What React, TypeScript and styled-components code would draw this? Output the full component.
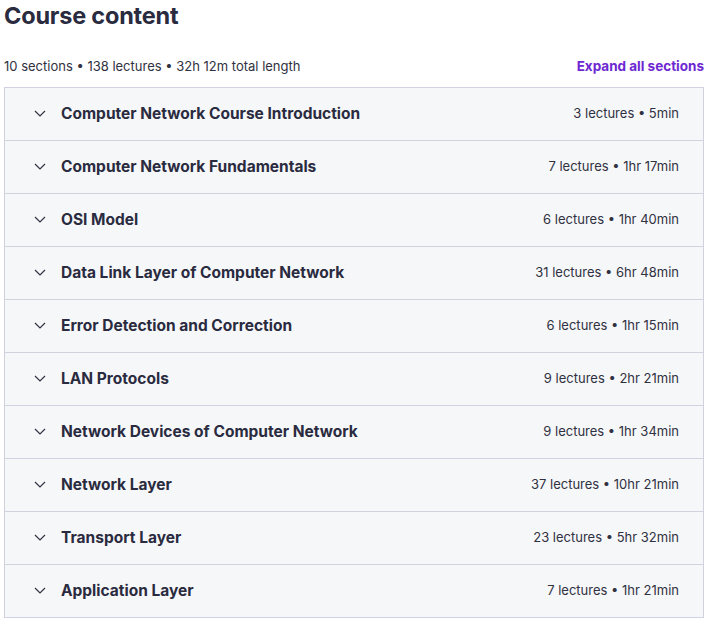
import React from 'react';
import styled, { createGlobalStyle } from 'styled-components';

const GlobalStyle = createGlobalStyle`
	html, body {
		margin: 0;
		padding: 0;
		background: #ffffff;
	}
	body {
		font-family: Inter, 'Noto Sans', sans-serif;
		color: #303141;
	}
`;

const Page = styled.div`
	width: 700px;
	padding: 0 6px 0 4px;
`;

const Heading = styled.h2`
	margin: 0;
	font-size: 23.5px;
	line-height: 32px;
	font-weight: 700;
	color: #2a2b3f;
	letter-spacing: -0.2px;
`;

const Summary = styled.div`
	display: flex;
	justify-content: space-between;
	align-items: center;
	margin-top: 24px;
	height: 20px;
	margin-bottom: 11px;
`;

const Stats = styled.span`
	font-size: 13px;
	color: #303141;
`;

const ExpandAll = styled.button`
	border: none;
	background: none;
	padding: 0;
	font-family: inherit;
	font-size: 13.5px;
	font-weight: 700;
	color: #6d28d2;
	cursor: pointer;
`;

const List = styled.div`
	border: 1px solid #d1d2e0;
	border-bottom: none;
`;

const Row = styled.div`
	box-sizing: border-box;
	display: flex;
	align-items: center;
	height: 53px;
	padding: 0 24px 2px 27px;
	background: #f6f7f9;
	border-bottom: 1px solid #d1d2e0;
`;

const Chevron = styled.svg`
	width: 16px;
	height: 16px;
	flex: none;
	margin-right: 13px;
`;

const Title = styled.span`
	flex: 1;
	font-size: 15.5px;
	font-weight: 700;
	color: #2a2b3f;
`;

const Meta = styled.span`
	font-size: 13px;
	color: #303141;
`;

const sections = [
	['Computer Network Course Introduction', '3 lectures • 5min'],
	['Computer Network Fundamentals', '7 lectures • 1hr 17min'],
	['OSI Model', '6 lectures • 1hr 40min'],
	['Data Link Layer of Computer Network', '31 lectures • 6hr 48min'],
	['Error Detection and Correction', '6 lectures • 1hr 15min'],
	['LAN Protocols', '9 lectures • 2hr 21min'],
	['Network Devices of Computer Network', '9 lectures • 1hr 34min'],
	['Network Layer', '37 lectures • 10hr 21min'],
	['Transport Layer', '23 lectures • 5hr 32min'],
	['Application Layer', '7 lectures • 1hr 21min'],
];

const App = () => (
	<>
		<GlobalStyle />
		<Page>
			<Heading>Course content</Heading>
			<Summary>
				<Stats>10 sections • 138 lectures • 32h 12m total length</Stats>
				<ExpandAll>Expand all sections</ExpandAll>
			</Summary>
			<List>
				{sections.map(([name, meta]) => (
					<Row key={name}>
						<Chevron viewBox="0 0 16 16">
							<path d="M3 6l5 5 5-5" fill="none" stroke="#303141" strokeWidth="1.2" />
						</Chevron>
						<Title>{name}</Title>
						<Meta>{meta}</Meta>
					</Row>
				))}
			</List>
		</Page>
	</>
);

export default App;
